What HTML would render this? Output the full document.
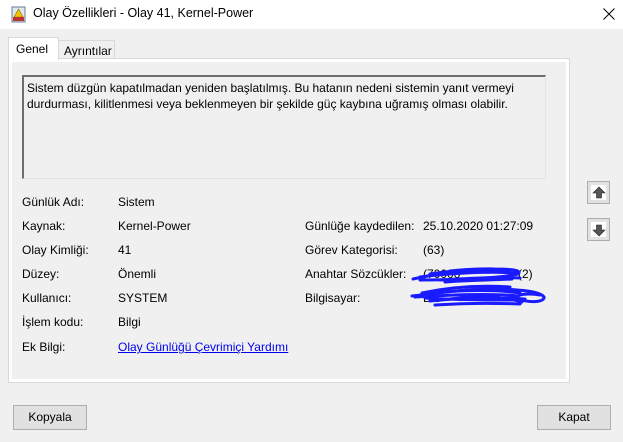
<!DOCTYPE html>
<html><head><meta charset="utf-8"><style>
*{margin:0;padding:0;box-sizing:border-box}
body{width:623px;height:442px;background:#f0f0f0;font-family:"Liberation Sans",sans-serif;font-size:12px;color:#000;position:relative;overflow:hidden}
.abs{position:absolute;white-space:nowrap}
#title{left:0;top:0;width:623px;height:29px;background:#fff}
.tabp{left:8px;top:58px;width:562px;height:325px;border:1px solid #d9d9d9;box-shadow:inset 0 0 0 3px #fff;background:#f0f0f0}
.btn{background:#e1e1e1;border:1px solid #adadad;text-align:center;line-height:22px}
.ab{width:23px;height:23px;border:1px solid #adadad;background:#e1e1e1}
.ab div{position:absolute;left:3px;top:3px;width:15px;height:15px;background:#fff}
</style></head><body>
<div id="title" class="abs"></div>
<svg class="abs" style="left:11px;top:6px" width="16" height="17"><rect x="1" y="1" width="13" height="15" fill="#dfe6ee" stroke="#6a7c92"/><path d="M7.5 3 L12 11 H3Z" fill="#f5c400" stroke="#8a6a00" stroke-width=".6"/><rect x="2" y="11" width="11" height="4" fill="#b33"/></svg>
<div class="abs" style="left:33px;top:6px;font-size:12.5px">Olay Özellikleri - Olay 41, Kernel-Power</div>
<svg class="abs" style="left:603px;top:8px" width="12" height="12"><path d="M0.5 0.5 L11.5 11.5 M11.5 0.5 L0.5 11.5" stroke="#000" stroke-width="1"/></svg>
<div class="abs tabp"></div>
<div class="abs" style="left:58px;top:40px;width:57px;height:19px;border:1px solid #d9d9d9;background:#f0f0f0;padding:3px 0 0 5px">Ayrıntılar</div>
<div class="abs" style="left:8px;top:37px;width:51px;height:23px;border:1px solid #d9d9d9;border-bottom:none;background:#fff;padding:4px 0 0 7px">Genel</div>
<div class="abs" style="left:22px;top:75px;width:524px;height:104px;border-top:2px solid #6d6d6d;border-left:2px solid #6d6d6d;border-right:1px solid #e3e3e3;border-bottom:1px solid #e3e3e3;background:#f0f0f0;padding:3px 0 0 3px;line-height:16px">Sistem düzgün kapatılmadan yeniden başlatılmış. Bu hatanın nedeni sistemin yanıt vermeyi<br>durdurması, kilitlenmesi veya beklenmeyen bir şekilde güç kaybına uğramış olması olabilir.</div>
<div class="abs" style="left:22px;top:195px">Günlük Adı:</div><div class="abs" style="left:118px;top:195px">Sistem</div>
<div class="abs" style="left:22px;top:219px">Kaynak:</div><div class="abs" style="left:118px;top:219px">Kernel-Power</div>
<div class="abs" style="left:22px;top:243px">Olay Kimliği:</div><div class="abs" style="left:118px;top:243px">41</div>
<div class="abs" style="left:22px;top:267px">Düzey:</div><div class="abs" style="left:118px;top:267px">Önemli</div>
<div class="abs" style="left:22px;top:291px">Kullanıcı:</div><div class="abs" style="left:118px;top:291px">SYSTEM</div>
<div class="abs" style="left:22px;top:315px">İşlem kodu:</div><div class="abs" style="left:118px;top:315px">Bilgi</div>
<div class="abs" style="left:22px;top:340px">Ek Bilgi:</div><div class="abs" style="left:118px;top:340px;color:#0000ee;text-decoration:underline">Olay Günlüğü Çevrimiçi Yardımı</div>
<div class="abs" style="left:305px;top:219px">Günlüğe kaydedilen:</div><div class="abs" style="left:423px;top:219px">25.10.2020 01:27:09</div>
<div class="abs" style="left:305px;top:243px">Görev Kategorisi:</div><div class="abs" style="left:423px;top:243px">(63)</div>
<div class="abs" style="left:305px;top:267px">Anahtar Sözcükler:</div><div class="abs" style="left:423px;top:267px">(70000</div><div class="abs" style="left:518px;top:267px">(2)</div>
<div class="abs" style="left:305px;top:291px">Bilgisayar:</div><div class="abs" style="left:423px;top:291px">DE</div>
<svg class="abs" style="left:400px;top:260px" width="150" height="55"><g fill="none" stroke="#1a1aff" stroke-width="3" stroke-linecap="round">
<path d="M13 19 C40 13 70 8 95 9 C115 9 122 11 118 14 C100 18 60 20 20 20"/>
<path d="M20 17 C50 13 90 11 116 13 M30 14 C55 10 80 9 108 10 M40 20 C70 18 100 17 120 18 M50 11 C75 8 95 9 110 11 M45 22 C70 20 95 20 112 19"/>
<path d="M12 36 C40 33 70 28 100 29 C120 30 140 31 144 37 C145 43 125 43 118 38 C115 34 130 33 140 35"/>
<path d="M15 37 C50 35 90 33 118 36 M30 41 C60 38 95 37 125 39 M40 32 C70 30 100 30 120 33 M22 33 C50 27 80 25 110 27 M35 45 C65 43 95 43 120 44 M50 39 C75 36 100 36 122 42 M25 38 C55 40 85 40 115 40"/>
</g></svg>
<div class="abs ab" style="left:587px;top:181px"><div></div><svg class="abs" style="left:4px;top:4px" width="14" height="14"><path d="M7 1 L13 7 H9.5 V12 H4.5 V7 H1Z" fill="#555" stroke="#222" stroke-width=".6"/></svg></div>
<div class="abs ab" style="left:587px;top:218px"><div></div><svg class="abs" style="left:4px;top:4px" width="14" height="14"><path d="M7 13 L13 7 H9.5 V2 H4.5 V7 H1Z" fill="#555" stroke="#222" stroke-width=".6"/></svg></div>
<div class="abs btn" style="left:13px;top:405px;width:74px;height:25px">Kopyala</div>
<div class="abs btn" style="left:537px;top:405px;width:74px;height:25px">Kapat</div>
</body></html>
